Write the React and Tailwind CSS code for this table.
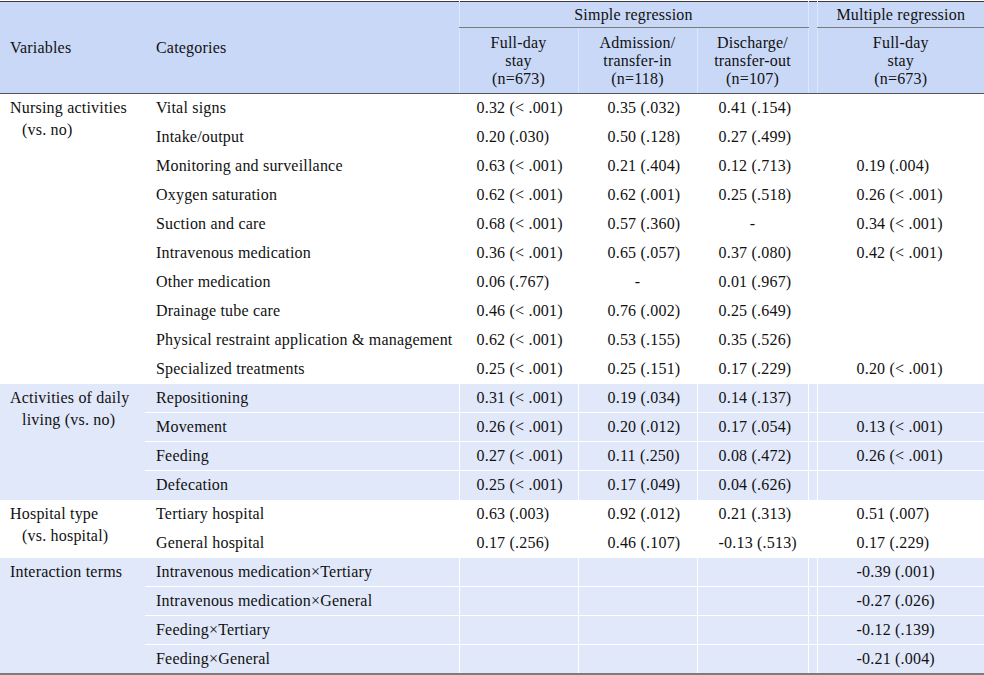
const groups = [
  {
    name: ['Nursing activities', '(vs. no)'],
    shaded: false,
    rows: [
      ['Vital signs', '0.32 (< .001)', '0.35 (.032)', '0.41 (.154)', ''],
      ['Intake/output', '0.20 (.030)', '0.50 (.128)', '0.27 (.499)', ''],
      ['Monitoring and surveillance', '0.63 (< .001)', '0.21 (.404)', '0.12 (.713)', '0.19 (.004)'],
      ['Oxygen saturation', '0.62 (< .001)', '0.62 (.001)', '0.25 (.518)', '0.26 (< .001)'],
      ['Suction and care', '0.68 (< .001)', '0.57 (.360)', '-', '0.34 (< .001)'],
      ['Intravenous medication', '0.36 (< .001)', '0.65 (.057)', '0.37 (.080)', '0.42 (< .001)'],
      ['Other medication', '0.06 (.767)', '-', '0.01 (.967)', ''],
      ['Drainage tube care', '0.46 (< .001)', '0.76 (.002)', '0.25 (.649)', ''],
      ['Physical restraint application & management', '0.62 (< .001)', '0.53 (.155)', '0.35 (.526)', ''],
      ['Specialized treatments', '0.25 (< .001)', '0.25 (.151)', '0.17 (.229)', '0.20 (< .001)'],
    ],
  },
  {
    name: ['Activities of daily', 'living (vs. no)'],
    shaded: true,
    rows: [
      ['Repositioning', '0.31 (< .001)', '0.19 (.034)', '0.14 (.137)', ''],
      ['Movement', '0.26 (< .001)', '0.20 (.012)', '0.17 (.054)', '0.13 (< .001)'],
      ['Feeding', '0.27 (< .001)', '0.11 (.250)', '0.08 (.472)', '0.26 (< .001)'],
      ['Defecation', '0.25 (< .001)', '0.17 (.049)', '0.04 (.626)', ''],
    ],
  },
  {
    name: ['Hospital type', '(vs. hospital)'],
    shaded: false,
    rows: [
      ['Tertiary hospital', '0.63 (.003)', '0.92 (.012)', '0.21 (.313)', '0.51 (.007)'],
      ['General hospital', '0.17 (.256)', '0.46 (.107)', '-0.13 (.513)', '0.17 (.229)'],
    ],
  },
  {
    name: ['Interaction terms'],
    shaded: true,
    rows: [
      ['Intravenous medication×Tertiary', '', '', '', '-0.39 (.001)'],
      ['Intravenous medication×General', '', '', '', '-0.27 (.026)'],
      ['Feeding×Tertiary', '', '', '', '-0.12 (.139)'],
      ['Feeding×General', '', '', '', '-0.21 (.004)'],
    ],
  },
];

// left padding of each value column
const pads = ['pl-[17px]', 'pl-[29px]', 'pl-[21px]', 'pl-[39px]'];

function Value({ v, pad }) {
  if (v === '-') return <span className="block text-center">-</span>;
  return <span className={`block ${pad}`}>{v}</span>;
}

export default function App() {
  return (
    <div className="w-[984px] h-[675px] bg-white pt-px font-['Liberation_Serif',serif] text-[16px] tracking-[0.2px] text-[#111]">
      <table className="w-[984px] table-fixed border-collapse border-t border-t-[#3a3a3a] border-b-2 border-b-[#7c7c7c]">
        <colgroup>
          <col className="w-[145px]" />
          <col className="w-[314px]" />
          <col className="w-[119px]" />
          <col className="w-[119px]" />
          <col className="w-[111px]" />
          <col className="w-[9px]" />
          <col className="w-[167px]" />
        </colgroup>
        <thead className="bg-[#c9d8f7] leading-[18px]">
          <tr className="h-[26px]">
            <th rowSpan={2} className="text-left font-normal pl-[10px] border-b border-b-[#555]">Variables</th>
            <th rowSpan={2} className="text-left font-normal pl-[11px] border-b border-b-[#555]">Categories</th>
            <th colSpan={3} className="font-normal border-l border-l-[#dde6fb] border-b border-b-[#7a7a7a]">Simple regression</th>
            <th rowSpan={2} className="border-l border-l-[#dde6fb] border-b border-b-[#555]"></th>
            <th className="font-normal border-l border-l-[#dde6fb] border-b border-b-[#7a7a7a]">Multiple regression</th>
          </tr>
          <tr className="h-[66px]">
            <th className="font-normal border-l border-l-[#dde6fb] border-b border-b-[#555]">Full-day<br />stay<br />(n=673)</th>
            <th className="font-normal border-l border-l-[#dde6fb] border-b border-b-[#555]">Admission/<br />transfer-in<br />(n=118)</th>
            <th className="font-normal border-l border-l-[#dde6fb] border-b border-b-[#555]">Discharge/<br />transfer-out<br />(n=107)</th>
            <th className="font-normal border-l border-l-[#dde6fb] border-b border-b-[#555]">Full-day<br />stay<br />(n=673)</th>
          </tr>
        </thead>
        <tbody className="leading-[22px]">
          {groups.map((g) =>
            g.rows.map((r, i) => {
              const line = g.shaded ? 'border-white' : 'border-transparent';
              const top = i > 0 ? `border-t ${line}` : '';
              return (
                <tr key={g.name[0] + i} className={`h-[29px] ${g.shaded ? 'bg-[#e1e8fa]' : 'bg-white'}`}>
                  {i === 0 && (
                    <td rowSpan={g.rows.length} className="align-top pt-[3px] pl-[10px] pr-1">
                      {g.name.map((l, k) => (
                        <span key={k} className={`block whitespace-nowrap ${k > 0 ? 'pl-3' : ''}`}>{l}</span>
                      ))}
                    </td>
                  )}
                  <td className={`pl-[11px] whitespace-nowrap ${top}`}>{r[0]}</td>
                  {[1, 2, 3].map((c) => (
                    <td key={c} className={`border-l ${line} ${top} whitespace-nowrap`}>
                      <Value v={r[c]} pad={pads[c - 1]} />
                    </td>
                  ))}
                  <td className={`border-l ${line} ${top}`}></td>
                  <td className={`border-l ${line} ${top} whitespace-nowrap`}>
                    <Value v={r[4]} pad={pads[3]} />
                  </td>
                </tr>
              );
            })
          )}
        </tbody>
      </table>
    </div>
  );
}
